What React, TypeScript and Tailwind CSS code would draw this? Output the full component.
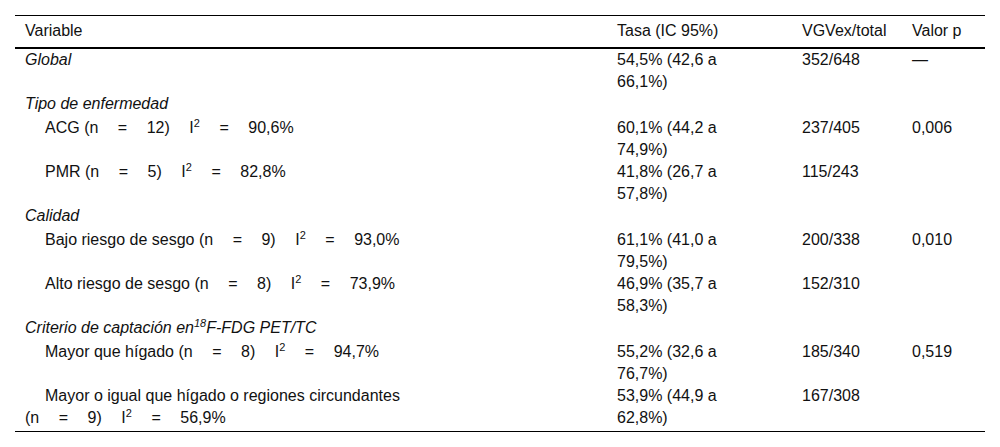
type Stat = { n: string; i2: string };

type Row =
  | { kind: "heading"; label: React.ReactNode; tasa?: [string, string]; ratio?: string; p?: string }
  | {
      kind: "item";
      label: string;
      stat: Stat;
      wrap?: boolean;
      tasa: [string, string];
      ratio: string;
      p?: string;
    };

const rows: Row[] = [
  { kind: "heading", label: "Global", tasa: ["54,5% (42,6 a", "66,1%)"], ratio: "352/648", p: "—" },
  { kind: "heading", label: "Tipo de enfermedad" },
  {
    kind: "item",
    label: "ACG",
    stat: { n: "12)", i2: "90,6%" },
    tasa: ["60,1% (44,2 a", "74,9%)"],
    ratio: "237/405",
    p: "0,006",
  },
  {
    kind: "item",
    label: "PMR",
    stat: { n: "5)", i2: "82,8%" },
    tasa: ["41,8% (26,7 a", "57,8%)"],
    ratio: "115/243",
  },
  { kind: "heading", label: "Calidad" },
  {
    kind: "item",
    label: "Bajo riesgo de sesgo",
    stat: { n: "9)", i2: "93,0%" },
    tasa: ["61,1% (41,0 a", "79,5%)"],
    ratio: "200/338",
    p: "0,010",
  },
  {
    kind: "item",
    label: "Alto riesgo de sesgo",
    stat: { n: "8)", i2: "73,9%" },
    tasa: ["46,9% (35,7 a", "58,3%)"],
    ratio: "152/310",
  },
  {
    kind: "heading",
    label: (
      <>
        Criterio de captación en
        <span className="relative -top-[6px] text-[11px] leading-none">18</span>F-FDG PET/TC
      </>
    ),
  },
  {
    kind: "item",
    label: "Mayor que hígado",
    stat: { n: "8)", i2: "94,7%" },
    tasa: ["55,2% (32,6 a", "76,7%)"],
    ratio: "185/340",
    p: "0,519",
  },
  {
    kind: "item",
    label: "Mayor o igual que hígado o regiones circundantes",
    stat: { n: "9)", i2: "56,9%" },
    wrap: true,
    tasa: ["53,9% (44,9 a", "62,8%)"],
    ratio: "167/308",
  },
];

function StatGroup({ stat }: { stat: Stat }) {
  return (
    <span className="inline-flex items-baseline gap-[19.5px] indent-0">
      <span>(n</span>
      <span>=</span>
      <span>{stat.n}</span>
      <span>
        I<span className="relative -top-[6px] text-[11px] leading-none">2</span>
      </span>
      <span>=</span>
      <span>{stat.i2}</span>
    </span>
  );
}

function Tasa({ value }: { value?: [string, string] }) {
  if (!value) return null;
  return (
    <>
      {value[0]}
      <br />
      {value[1]}
    </>
  );
}

export default function App() {
  return (
    <div className="min-h-screen bg-white pt-[15px] font-['Liberation_Sans',Arial,sans-serif] text-[16px] leading-[22px] text-[#111]">
      <div className="mx-[15px] border-t border-b border-black pb-[2px]">
        <div className="grid grid-cols-[592px_185px_110px_83px] border-b-2 border-black pt-[4px] pb-[5px]">
          <div className="pl-[10px]">Variable</div>
          <div className="pl-[10px]">Tasa (IC 95%)</div>
          <div className="pl-[10px]">VGVex/total</div>
          <div className="pl-[10px]">Valor p</div>
        </div>

        {rows.map((row, idx) => (
          <div
            key={idx}
            className={`grid grid-cols-[592px_185px_110px_83px] ${
              row.kind === "heading" && !row.tasa ? "pb-[2px]" : ""
            }`}
          >
            {row.kind === "heading" ? (
              <div className="pl-[10px] italic">{row.label}</div>
            ) : (
              <div className="pl-[10px] indent-5">
                {row.label}
                {row.wrap ? <br /> : " "}
                <StatGroup stat={row.stat} />
              </div>
            )}
            <div className="pl-[10px]">
              <Tasa value={row.tasa} />
            </div>
            <div className="pl-[10px]">{row.ratio}</div>
            <div className="pl-[10px]">{row.p}</div>
          </div>
        ))}
      </div>
    </div>
  );
}
